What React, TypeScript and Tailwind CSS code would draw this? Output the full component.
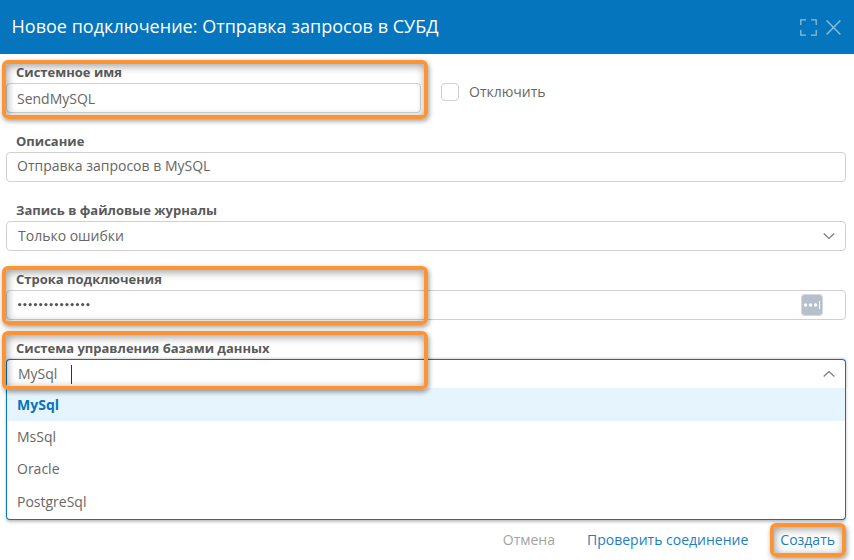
import type { ReactNode } from "react";

function Field({ label, children, className = "w-[840px]" }: { label: string; children: ReactNode; className?: string }) {
  return (
    <div className={`relative h-[69px] shrink-0 ${className}`}>
      <div className="h-5 pl-2.5 text-[13px] leading-[19px] font-bold whitespace-nowrap text-[#5a5a5a]">{label}</div>
      {children}
    </div>
  );
}

const inputBox =
  "flex h-[30px] w-full items-center rounded-[4px] border border-[#d1d1d1] bg-white text-[14px] leading-5";

function Chevron({ up = false }: { up?: boolean }) {
  return (
    <svg
      className={`mr-2.5 ml-auto ${up ? "mb-0.5" : ""}`}
      width="12"
      height="8"
      viewBox="0 0 12 8"
      fill="none"
      stroke="#777"
      strokeWidth="1.1"
    >
      <path d={up ? "M.7 6.5 6 1.5l5.3 5" : "M.7 1.5 6 6.5l5.3-5"} />
    </svg>
  );
}

function Highlight({ className }: { className: string }) {
  return (
    <div
      className={`pointer-events-none absolute z-20 rounded-[6px] border-4 border-[#fb9435] shadow-[1px_2px_5px_rgba(0,0,0,0.4),inset_1px_2px_8px_rgba(0,0,0,0.4)] ${className}`}
    />
  );
}

const options = [
  { name: "MySql", style: "h-[33px] bg-[#e6f4fe] pb-px font-bold text-[#0575bd]" },
  { name: "MsSql", style: "h-8 pb-0.5" },
  { name: "Oracle", style: "h-8 pb-0.5" },
  { name: "PostgreSql", style: "h-[33px] pb-px" },
];

export default function App() {
  return (
    <div className="relative flex h-[560px] w-[854px] flex-col overflow-hidden bg-white font-['Open_Sans','Noto_Sans',sans-serif] text-[#666]">
      <header className="flex h-[54px] shrink-0 items-center bg-[#0575bd] pr-[13px] pl-[11.5px] text-white">
        <h1 className="pb-0.5 text-[18px] leading-6 tracking-[0.02px] whitespace-nowrap">Новое подключение: Отправка запросов в СУБД</h1>
        <div className="ml-auto flex items-center gap-[9px]">
          <svg width="17" height="17" viewBox="0 0 17 17" fill="none" stroke="#8abfdf" strokeWidth="1.3">
            <path d="M.8 6V.8H6M11 .8h5.2V6M16.2 11v5.2H11M6 16.2H.8V11" />
          </svg>
          <svg width="15" height="15" viewBox="0 0 15 15" fill="none" stroke="#8abfdf" strokeWidth="1.4">
            <path d="m.6.6 13.8 13.8M14.4.6.6 14.4" />
          </svg>
        </div>
      </header>

      <main className="flex flex-col pt-[9px] pl-1.5">
        <div className="flex">
          <Field label="Системное имя" className="w-[415px]">
            <div className={`${inputBox} pt-0.5 pl-2.5`}>SendMySQL</div>
          </Field>
          <label className="mt-5 ml-5 flex h-[18px] items-center gap-2.5 text-[14px]">
            <span className="size-[18px] rounded-[4px] border border-[#d1d1d1]" />
            <span className="pb-0.5">Отключить</span>
          </label>
        </div>
        <Field label="Описание">
          <div className={`${inputBox} pb-0.5 pl-2.5`}>Отправка запросов в MySQL</div>
        </Field>
        <Field label="Запись в файловые журналы">
          <div className={`${inputBox} pl-[11px]`}>
            Только ошибки
            <Chevron />
          </div>
        </Field>
        <Field label="Строка подключения">
          <div className={`${inputBox} pl-[11px]`}>
            <svg width="74" height="4" viewBox="0 0 74 4" fill="#555">
              {Array.from({ length: 14 }, (_, i) => (
                <circle key={i} cx={1.7 + i * 5.25} cy="1.6" r="1.6" />
              ))}
            </svg>
            <svg className="mr-[22px] ml-auto" width="22" height="22" viewBox="0 0 22 22">
              <rect x=".5" y=".5" width="21" height="21" rx="3" fill="#b7bfcb" stroke="#d4dae3" />
              <g fill="#fff">
                <circle cx="4.5" cy="11" r="1.7" />
                <circle cx="9.5" cy="11" r="1.7" />
                <circle cx="14.5" cy="11" r="1.7" />
                <path d="M18 7h1v8h-1z" />
              </g>
            </svg>
          </div>
        </Field>
        <Field label="Система управления базами данных">
          <div className="flex h-[30px] w-full items-center rounded-t-[4px] border border-b-0 border-[#0575bd] bg-white pl-[11px] text-[14px] shadow-[0_0_3px_rgba(0,0,0,0.35)]">
            <span className="pb-0.5">MySql</span>
            <span className="ml-3.5 h-[19px] w-px bg-[#333]" />
            <Chevron up />
          </div>
          <ul className="absolute top-[49px] left-0 z-10 h-[132px] w-[840px] overflow-hidden rounded-b-[4px] border border-t-0 border-[#0575bd] bg-white text-[14px] shadow-[0_2px_3px_rgba(0,0,0,0.25)]">
            {options.map(({ name, style }) => (
              <li key={name} className={`flex items-center pl-2.5 ${style}`}>
                {name}
              </li>
            ))}
          </ul>
        </Field>
      </main>

      <footer className="mt-auto flex h-10 items-center justify-end pr-[19px] pb-0.5 text-[14px] text-[#1b80c2]">
        <span className="mr-8 text-[#a3a3a3]">Отмена</span>
        <span className="mr-8">Проверить соединение</span>
        <span>Создать</span>
      </footer>

      <Highlight className="top-[60px] left-[2px] h-[59px] w-[426px]" />
      <Highlight className="top-[266px] left-[2px] h-[59px] w-[426px]" />
      <Highlight className="top-[331px] left-[2px] h-[59px] w-[426px]" />
      <Highlight className="top-[523px] left-[770px] h-[34px] w-[76px]" />
    </div>
  );
}
